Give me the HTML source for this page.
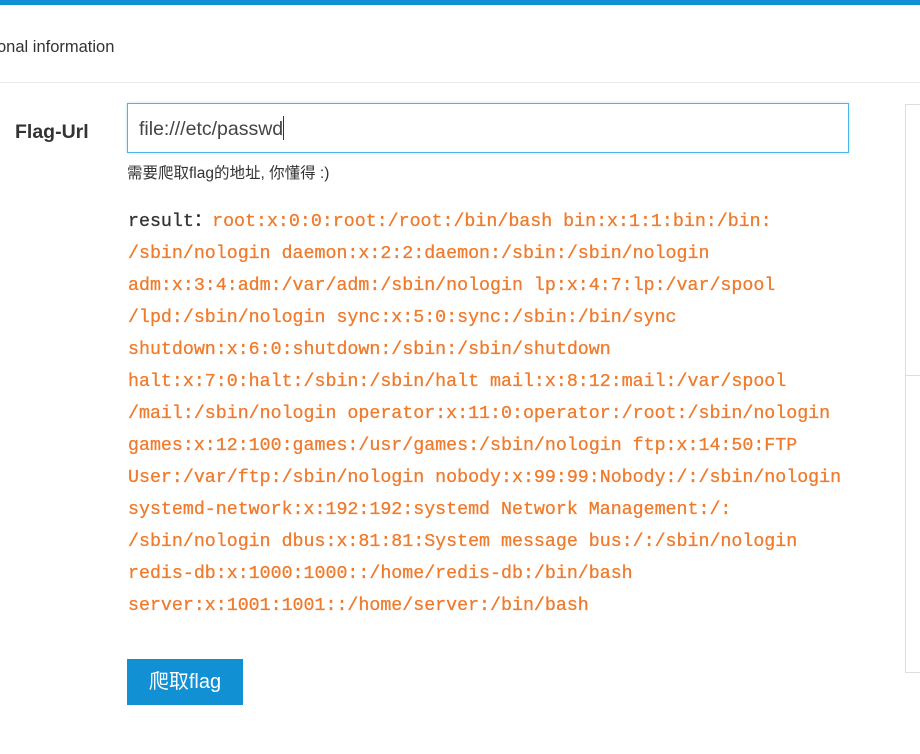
<!DOCTYPE html>
<html><head><meta charset="utf-8"><style>
body{margin:0;width:920px;height:754px;overflow:hidden;background:#fff;font-family:"Liberation Sans","Noto Sans CJK SC",sans-serif;position:relative;color:#333}
.a{position:absolute}
.mono{font-family:"Liberation Mono","DejaVu Sans Mono",monospace;font-size:18.3px;line-height:32px;white-space:pre;color:#f07b2c;-webkit-text-stroke:0.3px #f07b2c}
.mono b{color:#333;font-weight:normal;-webkit-text-stroke:0.3px #333}
</style></head><body>
<div class="a" style="left:0;top:0;width:920px;height:5px;background:#1190d3"></div>
<div class="a" style="left:-3px;top:38px;font-size:16.5px;color:#333">onal information</div>
<div class="a" style="left:0;top:82px;width:920px;height:1px;background:#e8e8e8"></div>
<div class="a" style="left:905px;top:104px;width:20px;height:569px;border:1px solid #ddd;box-sizing:border-box"></div>
<div class="a" style="left:905px;top:375px;width:20px;height:1px;background:#ddd"></div>
<div class="a" style="left:15px;top:121px;font-size:19.5px;font-weight:bold;color:#333">Flag-Url</div>
<div class="a" style="left:127px;top:103px;width:722px;height:50px;border:1px solid #4db3ec;box-sizing:border-box;box-shadow:0 0 3px rgba(77,179,236,.4)"></div>
<div class="a" style="left:139px;top:116px;font-size:19.5px;color:#444">file:///etc/passwd<span style="display:inline-block;width:1px;height:24px;background:#333;vertical-align:-5px"></span></div>
<div class="a" style="left:127px;top:161px;font-size:15.5px;color:#333">需要爬取flag的地址, 你懂得 :)</div>
<div class="a mono" style="left:128px;top:206px"><b>result：</b>root:x:0:0:root:/root:/bin/bash bin:x:1:1:bin:/bin:
/sbin/nologin daemon:x:2:2:daemon:/sbin:/sbin/nologin
adm:x:3:4:adm:/var/adm:/sbin/nologin lp:x:4:7:lp:/var/spool
/lpd:/sbin/nologin sync:x:5:0:sync:/sbin:/bin/sync
shutdown:x:6:0:shutdown:/sbin:/sbin/shutdown
halt:x:7:0:halt:/sbin:/sbin/halt mail:x:8:12:mail:/var/spool
/mail:/sbin/nologin operator:x:11:0:operator:/root:/sbin/nologin
games:x:12:100:games:/usr/games:/sbin/nologin ftp:x:14:50:FTP
User:/var/ftp:/sbin/nologin nobody:x:99:99:Nobody:/:/sbin/nologin
systemd-network:x:192:192:systemd Network Management:/:
/sbin/nologin dbus:x:81:81:System message bus:/:/sbin/nologin
redis-db:x:1000:1000::/home/redis-db:/bin/bash
server:x:1001:1001::/home/server:/bin/bash</div>
<div class="a" style="left:127px;top:659px;width:116px;height:46px;background:#1190d3;color:#fff;font-size:20px;line-height:46px;text-align:center">爬取flag</div>
</body></html>
